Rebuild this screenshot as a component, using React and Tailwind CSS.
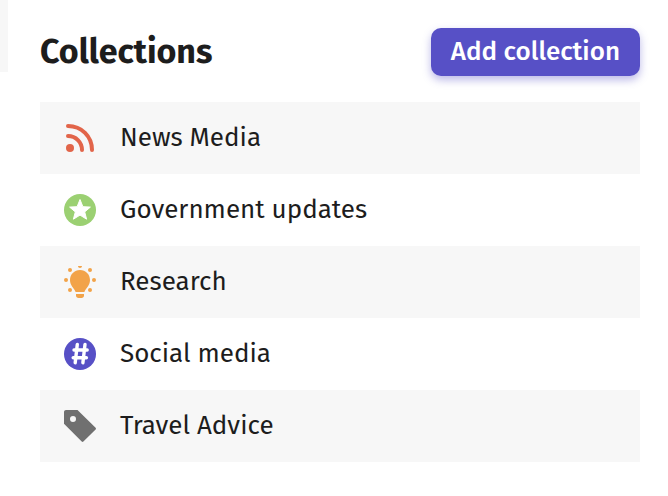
import React from 'react';

const RssIcon = () => (
  <svg viewBox="0 0 32 32" className="w-8 h-8" fill="none" stroke="#e2654a" strokeWidth="4" strokeLinecap="round" aria-hidden="true">
    <path d="M4 4C17.5 4 28 14.5 28 28" />
    <path d="M4 14C11.8 14 18 20.2 18 28" />
    <circle cx="6" cy="26" r="4" fill="#e2654a" stroke="none" />
  </svg>
);

const StarIcon = () => (
  <svg viewBox="0 0 32 32" className="w-8 h-8" aria-hidden="true">
    <circle cx="16" cy="16" r="16" fill="#9bd072" />
    <path
      fill="#fff"
      stroke="#fff"
      strokeLinejoin="round"
      d="M16 5.5L18.9 12.7L26.4 13.1L20.7 17.9L22.6 25.2L16 21.1L9.4 25.2L11.3 17.9L5.6 13.1L13.1 12.7Z"
    />
  </svg>
);

const BulbIcon = () => (
  <svg viewBox="0 0 32 32" className="w-8 h-8" fill="#f2a349" aria-hidden="true">
    <path d="M16 4C10.3 4 6 8.4 6 13.9C6 20 10.2 21.6 11.6 26H20.4C21.8 21.6 26 20 26 13.9C26 8.4 21.7 4 16 4Z" />
    <path d="M12 28H20V29.5C20 31 19 32 17.5 32H14.5C13 32 12 31 12 29.5Z" />
    <path d="M14 0H18C18 1.2 17.1 2 16 2C14.9 2 14 1.2 14 0Z" />
    <circle cx="6" cy="4" r="2" />
    <circle cx="26" cy="4" r="2" />
    <circle cx="2" cy="14" r="2" />
    <circle cx="30" cy="14" r="2" />
    <circle cx="6" cy="24" r="2" />
    <circle cx="26" cy="24" r="2" />
  </svg>
);

const HashIcon = () => (
  <svg viewBox="0 0 32 32" className="w-8 h-8" fill="none" aria-hidden="true">
    <circle cx="16" cy="16" r="16" fill="#5750c6" />
    <g stroke="#fff" strokeWidth="3.4" strokeLinecap="round">
      <path d="M13.3 6.4L11.2 24.8" />
      <path d="M21 6.4L18.9 24.8" />
      <path d="M10 12H23.2" />
      <path d="M9.2 19.8H22.4" />
    </g>
  </svg>
);

const TagIcon = () => (
  <svg viewBox="0 0 32 32" className="w-8 h-8" fill="#707070" aria-hidden="true">
    <path
      fillRule="evenodd"
      d="M2 0H13.5L31.6 17.8C32.1 18.3 32.1 19 31.6 19.5L19.4 31.6C18.9 32.1 18.2 32.1 17.7 31.6L0 13.8V2C0 .9 .9 0 2 0ZM9 6A3 3 0 1 0 9 12A3 3 0 1 0 9 6Z"
    />
  </svg>
);

const COLLECTIONS = [
  { name: 'News Media', icon: RssIcon },
  { name: 'Government updates', icon: StarIcon },
  { name: 'Research', icon: BulbIcon },
  { name: 'Social media', icon: HashIcon },
  { name: 'Travel Advice', icon: TagIcon },
];

const App = () => (
  <div className="flex items-start bg-white text-[#1d1d1d] font-['Fira_Sans','Noto_Sans',sans-serif]">
    {/* Edge of the neighbouring panel */}
    <div className="w-2 h-18 shrink-0 bg-[#f7f7f7]" />

    <main className="flex-1 pt-7 pl-8 pr-7">
      <header className="flex items-center justify-between">
        <h1 className="text-[34px] leading-12 font-bold">Collections</h1>
        <button
          type="button"
          className="h-12 px-5 rounded-[10px] bg-[#5750c6] text-white text-[26px] leading-8 font-medium whitespace-nowrap shadow-[0_4px_8px_#5750c666]"
        >
          Add collection
        </button>
      </header>

      <ul className="mt-[26px]">
        {COLLECTIONS.map(({ name, icon: Icon }) => (
          <li key={name} className="flex items-center gap-6 h-18 px-6 odd:bg-[#f7f7f7]">
            <Icon />
            <span className="text-[26px] leading-8">{name}</span>
          </li>
        ))}
      </ul>
    </main>
  </div>
);

export default App;
